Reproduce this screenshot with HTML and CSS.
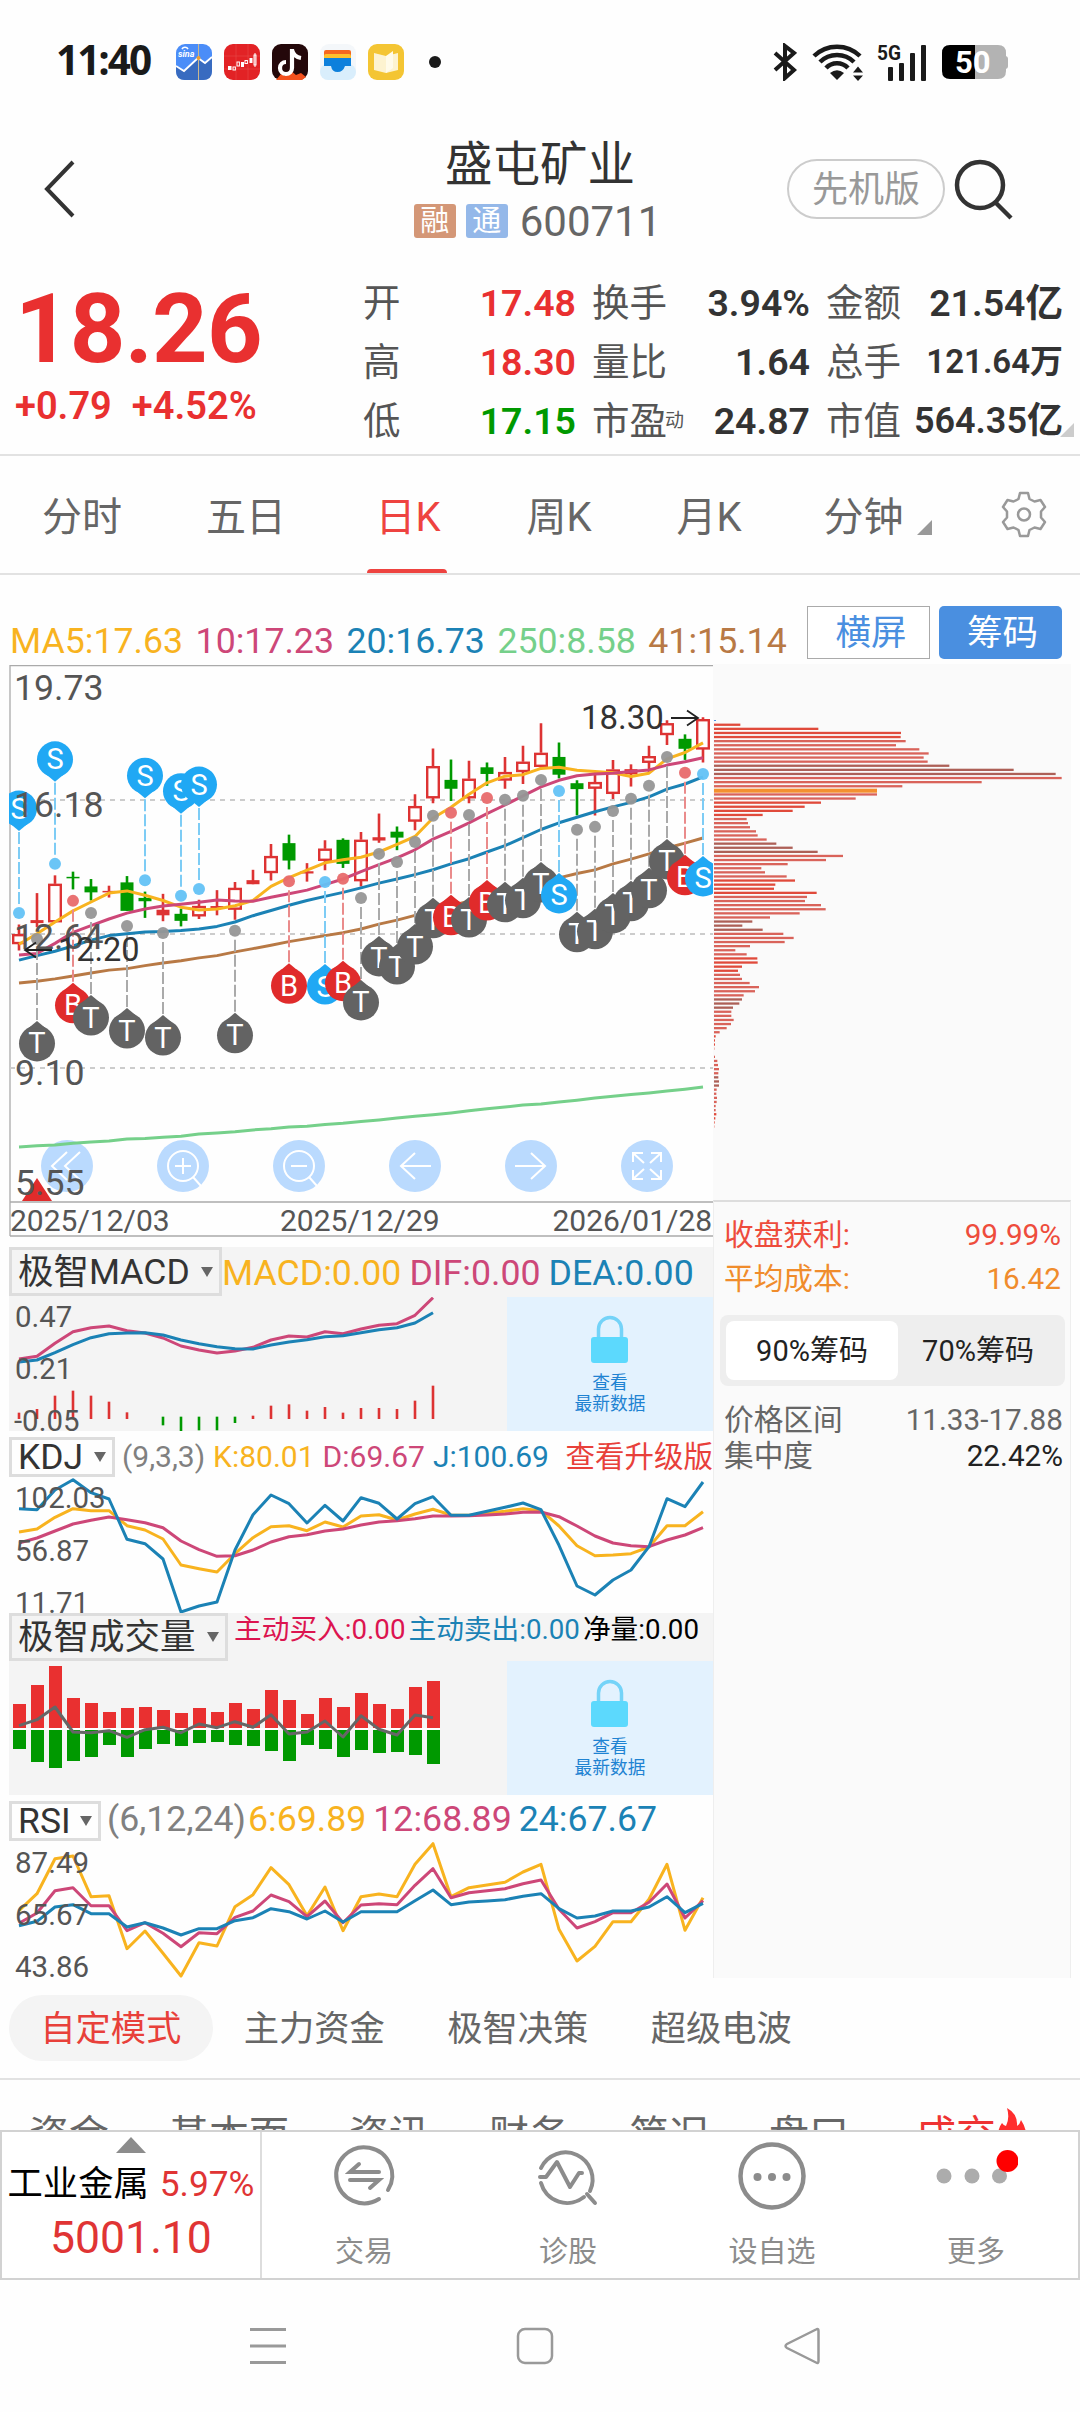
FILE: index.html
```html
<!DOCTYPE html>
<html lang="zh-CN">
<head>
  <meta charset="UTF-8">
  <title>盛屯矿业 600711</title>
  <meta name="viewport" content="width=device-width, initial-scale=1.0">
  <link rel="stylesheet" href="styles.css">
</head>
<body>
  <div class="status-bar">
    <span class="clock">11:40</span>
    <div class="notif-icons">
      <svg width="36" height="36" viewBox="0 0 36 36">
        <rect width="36" height="36" rx="9" fill="#4b8df8"/>
        <path d="M0 22L8 27 22 14 29 19 36 13V27Q36 36 27 36H9Q0 36 0 27Z" fill="#386bc0"/>
        <path d="M0 22L8 27 22 14 29 19 36 13" fill="none" stroke="#fff" stroke-width="1.8"/>
        <path d="M22.5 0V36" stroke="#c9b78f" stroke-width="1"/>
        <circle cx="22.5" cy="14" r="2" fill="#f0a030"/>
        <text x="2" y="13" font-size="9" font-weight="700" font-style="italic" fill="#fff">sina</text>
        <path d="M6 5a3.5 3.5 0 0 1 6 0" fill="none" stroke="#fff" stroke-width="1.6"/>
      </svg>
      <svg width="36" height="36" viewBox="0 0 36 36">
        <rect width="36" height="36" rx="9" fill="#e22225"/>
        <path d="M12 0V36M24 0V36M0 12H36M0 25H36" stroke="#ea4a48" stroke-width=".6"/>
        <g fill="none" stroke="#fff" stroke-width="1">
          <rect x="9" y="23" width="2.4" height="3"/><rect x="13" y="18" width="2.4" height="4"/>
          <rect x="21" y="16.500" width="2.4" height="3"/><rect x="30" y="11" width="2" height="10"/>
          <path d="M31 9V23"/>
        </g>
        <path d="M4 22h3.5v4H4zM17 18h3v5h-3zM25.500 14h3v5h-3z" fill="#fff"/>
      </svg>
      <svg width="36" height="36" viewBox="0 0 36 36">
        <rect width="36" height="36" rx="9" fill="#24080a"/>
        <path d="M4 36L9 30 13 32 18 26 24 31 29 29 34 33 30 36Z" fill="#f4511e"/>
        <path d="M20 5V24a6 6 0 1 1-6-6M20 6q2 7 9 8" fill="none" stroke="#fff" stroke-width="4.200"/>
      </svg>
      <svg width="36" height="36" viewBox="0 0 36 36">
        <rect width="36" height="36" rx="9" fill="#f4f7fa"/>
        <rect y="20" width="36" height="16" rx="8" fill="#d9eefc"/>
        <rect x="4" y="6" width="27" height="8" rx="2" fill="#f4671f"/>
        <rect x="4" y="10" width="27" height="8" rx="2" fill="#fcc02e"/>
        <path d="M4 14H31V22H25Q23 28 17.500 28T11 22H4Z" fill="#0d80dc"/>
      </svg>
      <svg width="36" height="36" viewBox="0 0 36 36">
        <rect width="36" height="36" rx="9" fill="#f4c533"/>
        <path d="M6 9L18 12 30 9V26L18 29 6 26Z" fill="#fdf3d0"/>
        <path d="M18 12L25 7V24L18 29Z" fill="#fffbea"/>
      </svg>
    </div>
    <span class="notif-dot"></span>
    <div class="sys-icons">
      <svg width="24" height="38" viewBox="0 0 24 38">
        <path d="M2 10L21 27 12 35V3L21 10 2 27" fill="none" stroke="#1a1a1a" stroke-width="4"/>
      </svg>
      <svg width="52" height="38" viewBox="0 0 52 38">
        <g fill="none" stroke="#1a1a1a" stroke-width="4.500">
          <path d="M2 13a33 33 0 0 1 46 0M8 19a24 24 0 0 1 34 0M14 25a15 15 0 0 1 22 0"/>
        </g>
        <path d="M18 30q7-5.500 14 0L25 37Z" fill="#1a1a1a"/>
        <path d="M41 29.500L46 23.500 51 29.500ZM41 32.500H51L46 38Z" fill="#1a1a1a"/>
      </svg>
      <svg width="50" height="38" viewBox="0 0 50 38">
        <text x="0" y="16.500" font-size="20" font-weight="700" textLength="24" lengthAdjust="spacingAndGlyphs" fill="#1a1a1a">5G</text>
        <g fill="#1a1a1a">
          <rect x="11" y="24" width="5" height="14" rx="1"/><rect x="22" y="20" width="5" height="18" rx="1"/>
          <rect x="33" y="10" width="5" height="28" rx="1"/><rect x="44" y="2" width="5" height="36" rx="1"/>
        </g>
      </svg>
      <svg width="67" height="34" viewBox="0 0 67 34">
        <rect x="50" y="11" width="16" height="13" rx="3" fill="#b3b3b3"/>
        <path d="M33 0H56Q64 0 64 8V26Q64 34 56 34H33Z" fill="#b3b3b3"/>
        <path d="M8 0H33V34H8Q0 34 0 26V8Q0 0 8 0Z" fill="#000"/>
        <text x="13" y="28" font-size="31" font-weight="700" fill="#fff">50</text>
      </svg>
    </div>
  </div>

  <header class="title-bar">
    <svg class="back" width="32" height="58" viewBox="0 0 32 58">
      <path d="M29 2L3 29 29 56" fill="none" stroke="#333" stroke-width="4"/>
    </svg>
    <div class="stock-name">
      <h1>盛屯矿业</h1>
      <div class="code-row">
        <span class="tag tag-rong">融</span>
        <span class="tag tag-tong">通</span>
        <span class="code">600711</span>
      </div>
    </div>
    <div class="title-actions">
      <span class="pioneer">先机版</span>
      <svg width="60" height="62" viewBox="0 0 60 62">
        <circle cx="26" cy="26" r="23" fill="none" stroke="#333" stroke-width="4.500"/>
        <path d="M41 43L57 59" stroke="#333" stroke-width="4.500"/>
      </svg>
    </div>
  </header>

  <section class="quote">
    <div class="price-col">
      <div class="price">18.26</div>
      <div class="change"><span>+0.79</span><span>+4.52%</span></div>
    </div>
    <div class="stats">
      <span class="lbl">开</span><b class="up">17.48</b><span class="lbl">换手</span><b>3.94%</b><span class="lbl">金额</span><b>21.54亿</b>
      <span class="lbl">高</span><b class="up">18.30</b><span class="lbl">量比</span><b>1.64</b><span class="lbl">总手</span><b class="fit-s">121.64万</b>
      <span class="lbl">低</span><b class="down">17.15</b><span class="lbl">市盈<small>动</small></span><b>24.87</b><span class="lbl">市值</span><b class="fit-m">564.35亿</b>
    </div>
    <i class="corner"></i>
  </section>

  <nav class="period-tabs">
    <span class="w1">分时</span>
    <span class="w1">五日</span>
    <span class="w2 active">日K</span>
    <span class="w3">周K</span>
    <span class="w3">月K</span>
    <span class="w4">分钟<i class="corner-tri"></i></span>
    <svg width="48" height="48" viewBox="0 0 48 48">
      <g fill="none" stroke="#999" stroke-width="2.500" stroke-linejoin="round">
        <path d="M20 2h8l1.500 6 5 2.500 6-1.500 4.500 7-4 4.500v6l4 4.500-4.500 7-6-1.500-5 2.500L28 45h-8l-1.500-6-5-2.500-6 1.500L3 31l4-4.500v-6L3 16l4.500-7 6 1.500 5-2.500Z"/>
        <circle cx="24" cy="23.500" r="6"/>
      </g>
    </svg>
  </nav>

  <div class="ma-row">
    <div class="ma-values">
      <span class="c-yellow">MA5:17.63</span>
      <span class="c-pink">10:17.23</span>
      <span class="c-blue">20:16.73</span>
      <span class="c-green">250:8.58</span>
      <span class="c-brown">41:15.14</span>
    </div>
    <div class="ma-buttons">
      <button class="btn-line">横屏</button>
      <button class="btn-fill">筹码</button>
    </div>
  </div>

  <main class="board">
    <div class="charts">
      <svg id="kline" width="704" height="572"></svg>

      <div class="ind-head grey head-macd">
        <span class="picker">极智MACD<i></i></span>
        <div class="vals big"><span class="c-yellow">MACD:0.00</span><span class="c-pink">DIF:0.00</span><span class="c-blue">DEA:0.00</span></div>
      </div>
      <div class="ind-body grey">
        <svg id="macd" width="498" height="134"></svg>
        <div class="lock-pane">
          <svg width="38" height="48" viewBox="0 0 38 48">
            <path d="M7.500 24V14a11.500 11.500 0 0 1 23 0V24" fill="none" stroke="#74d3f8" stroke-width="3.500"/>
            <rect x="0" y="22" width="37" height="26" rx="3" fill="#5cd9fd"/>
          </svg>
          <p>查看<br>最新数据</p>
        </div>
      </div>

      <div class="ind-head head-kdj">
        <span class="picker">KDJ<i></i></span>
        <div class="vals mid"><span class="c-grey">(9,3,3)</span><span class="c-yellow">K:80.01</span><span class="c-pink">D:69.67</span><span class="c-blue">J:100.69</span></div>
        <span class="upgrade">查看升级版</span>
      </div>
      <svg id="kdj" width="704" height="135"></svg>

      <div class="ind-head grey head-vol">
        <span class="picker">极智成交量<i></i></span>
        <div class="vals small"><span class="c-red">主动买入:0.00</span><span class="c-blue">主动卖出:0.00</span><span class="c-black">净量:0.00</span></div>
      </div>
      <div class="ind-body grey">
        <svg id="vol" width="498" height="134"></svg>
        <div class="lock-pane">
          <svg width="38" height="48" viewBox="0 0 38 48">
            <path d="M7.500 24V14a11.500 11.500 0 0 1 23 0V24" fill="none" stroke="#74d3f8" stroke-width="3.500"/>
            <rect x="0" y="22" width="37" height="26" rx="3" fill="#5cd9fd"/>
          </svg>
          <p>查看<br>最新数据</p>
        </div>
      </div>

      <div class="ind-head head-rsi">
        <span class="picker">RSI<i></i></span>
        <div class="vals big"><span class="c-grey">(6,12,24)</span><span class="c-yellow">6:69.89</span><span class="c-pink">12:68.89</span><span class="c-blue">24:67.67</span></div>
      </div>
      <svg id="rsi" width="704" height="137"></svg>
    </div>

    <aside class="chips">
      <svg id="chips" width="358" height="536"></svg>
      <div class="chip-info">
        <div class="chip-row c-profit"><span>收盘获利:</span><span>99.99%</span></div>
        <div class="chip-row c-cost"><span>平均成本:</span><span>16.42</span></div>
        <div class="switch"><span class="on">90%筹码</span><span>70%筹码</span></div>
        <div class="chip-row range"><span>价格区间</span><span>11.33-17.88</span></div>
        <div class="chip-row range"><span>集中度</span><span class="dark">22.42%</span></div>
      </div>
    </aside>
  </main>

  <nav class="mode-tabs">
    <span class="active">自定模式</span><span>主力资金</span><span>极智决策</span><span>超级电波</span>
  </nav>

  <nav class="detail-tabs">
    <span>资金</span><span>基本面</span><span>资讯</span><span>财务</span><span>简况</span><span>盘口</span>
    <span class="hot">成交<svg width="32" height="38" viewBox="0 0 32 38"><path d="M11 0Q22 6 21 18 24 16 25 12 31 21 30 30 24 38 14 38 4 38 2 28 2 20 6 15 8 18 10 18 14 10 11 0Z" fill="#ff2d2d"/></svg></span>
  </nav>

  <footer class="toolbar">
    <div class="sector">
      <i class="up-tri"></i>
      <div class="sector-line"><span>工业金属</span><span class="rise">5.97%</span></div>
      <div class="sector-val">5001.10</div>
    </div>
    <div class="tool">
      <svg width="72" height="72" viewBox="0 0 72 72" fill="none" stroke="#8c8c8c" stroke-width="4" stroke-linecap="round">
        <path d="M51 59A28 28 0 1 1 60 50"/>
        <path d="M51 32H22L31 24M22 40H51L42 48"/>
      </svg>
      <span>交易</span>
    </div>
    <div class="tool">
      <svg width="72" height="72" viewBox="0 0 72 72" fill="none" stroke="#8c8c8c" stroke-width="4" stroke-linecap="round">
        <path d="M9 28A27 27 0 1 1 58 51M9 43A27 27 0 0 0 52 57"/>
        <path d="M8 37H14L25 22 38 47 47 33H50M55 54L63 63" stroke-linejoin="round"/>
      </svg>
      <span>诊股</span>
    </div>
    <div class="tool">
      <svg width="72" height="72" viewBox="0 0 72 72">
        <circle cx="36" cy="36" r="31.500" fill="none" stroke="#8c8c8c" stroke-width="4.500"/>
        <g fill="#8c8c8c"><circle cx="21.500" cy="37" r="4"/><circle cx="36" cy="37" r="4"/><circle cx="50.500" cy="37" r="4"/></g>
      </svg>
      <span>设自选</span>
    </div>
    <div class="tool">
      <svg width="84" height="72" viewBox="0 0 84 72">
        <g fill="#acacac"><circle cx="10" cy="36" r="7.500"/><circle cx="38" cy="36" r="7.500"/><circle cx="65.500" cy="36" r="7.500"/></g>
        <circle cx="73.500" cy="21" r="11" fill="#f00"/>
      </svg>
      <span>更多</span>
    </div>
  </footer>

  <div class="sys-nav">
    <svg width="40" height="40" viewBox="0 0 40 40"><path d="M2 3.500H38M2 20H38M2 36.500H38" stroke="#999" stroke-width="3"/></svg>
    <svg width="40" height="40" viewBox="0 0 40 40"><rect x="3" y="3" width="34" height="34" rx="7" fill="none" stroke="#999" stroke-width="2.500"/></svg>
    <svg width="40" height="40" viewBox="0 0 40 40"><path d="M34 3.500Q36.500 2 36.500 5V35Q36.500 38 34 36.500L5 22Q2 20 5 18Z" fill="none" stroke="#999" stroke-width="2.500"/></svg>
  </div>

  <script src="charts.js"></script>
</body>
</html>
```

FILE: styles.css
```css
* {
  box-sizing: border-box;
}
html, body {
  margin: 0;
  padding: 0;
}
body {
  width: 1080px;
  height: 2412px;
  overflow: hidden;
  background: #fefefe;
  color: #333;
  font-family: Roboto, "Noto Sans CJK SC", sans-serif;
}
svg {
  display: block;
  flex: none;
}
svg text {
  font-family: Roboto, "Noto Sans CJK SC", sans-serif;
}
span, b {
  white-space: nowrap;
}

/* status bar */
.status-bar {
  height: 124px;
  display: flex;
  align-items: center;
  padding-left: 56px;
}
.clock {
  width: 120px;
  font-family: "Open Sans", sans-serif;
  font-size: 40.5px;
  font-weight: 700;
  letter-spacing: -2px;
  line-height: 50px;
  margin-top: -4px;
  color: #1a1a1a;
}
.notif-icons {
  display: flex;
  gap: 12px;
}
.notif-dot {
  width: 12px;
  height: 12px;
  margin-left: 25px;
  border-radius: 50%;
  background: #1a1a1a;
}
.sys-icons {
  display: flex;
  align-items: center;
  margin-left: 332px;
}
.sys-icons svg:nth-child(2) {
  margin-left: 15px;
}
.sys-icons svg:nth-child(3) {
  margin-left: 13px;
}
.sys-icons svg:nth-child(4) {
  margin-left: 15px;
}

/* title */
.title-bar {
  height: 131px;
  display: flex;
  position: relative;
  justify-content: center;
}
.back {
  position: absolute;
  left: 44px;
  top: 36px;
}
.stock-name {
  display: flex;
  flex-direction: column;
  align-items: center;
  padding-top: 12px;
}
.stock-name h1 {
  margin: 0;
  font-size: 47.5px;
  font-weight: 400;
  line-height: 58px;
}
.code-row {
  display: flex;
  align-items: center;
  height: 54px;
  margin-right: 5px;
}
.tag {
  width: 42px;
  height: 34px;
  margin-right: 10px;
  border-radius: 3px;
  color: #fff;
  font-size: 29px;
  line-height: 34px;
  text-align: center;
}
.tag-rong {
  background: #d49777;
}
.tag-tong {
  background: #94b8e9;
}
.code {
  margin-left: 2px;
  font-size: 42px;
  color: #666;
}
.title-actions {
  position: absolute;
  right: 66px;
  top: 35px;
  display: flex;
  gap: 9px;
}
.pioneer {
  width: 158px;
  height: 60px;
  border: 2px solid #ccc;
  border-radius: 30px;
  color: #999;
  font-size: 36px;
  line-height: 58px;
  text-align: center;
}

/* quote */
.quote {
  position: relative;
  display: flex;
  height: 201px;
  padding-top: 18px;
  border-bottom: 2px solid #e2e2e2;
}
.price-col {
  width: 363px;
  padding-left: 15px;
  color: #e93030;
  font-weight: 500;
}
.price {
  height: 112px;
  line-height: 112px;
  font-size: 97px;
  font-weight: 700;
  letter-spacing: -0.8px;
}
.change {
  display: flex;
  gap: 20px;
  font-size: 38px;
  line-height: 42px;
  font-weight: 600;
}
.stats {
  display: grid;
  grid-template-columns: 78px 135px 93px 141px 94px 159px;
  grid-template-rows: repeat(3, 59px);
  justify-content: start;
  align-items: center;
  font-size: 37.5px;
  line-height: 44px;
}
.stats b {
  font-weight: 600;
  text-align: right;
}
.stats .lbl {
  color: #555;
  font-size: 37.5px;
}
.stats .lbl:nth-child(6n+3), .stats .lbl:nth-child(6n+5) {
  padding-left: 16px;
}
.stats small {
  display: inline-block;
  margin-left: -2px;
  font-size: 19px;
  vertical-align: 7px;
  line-height: 1;
}
.stats .up {
  color: #e93030;
}
.stats .down {
  color: #009900;
}
.stats .fit-s {
  font-size: 33px;
}
.stats .fit-m {
  font-size: 36px;
}
.corner {
  position: absolute;
  right: 6px;
  bottom: 17px;
  border-left: 14px solid transparent;
  border-bottom: 14px solid #ccc;
}

/* period tabs */
.period-tabs {
  display: flex;
  align-items: center;
  height: 119px;
  border-bottom: 2px solid #e2e2e2;
  color: #666;
  font-size: 40px;
  text-align: center;
}
.period-tabs span {
  position: relative;
  height: 117px;
  line-height: 123px;
}
.period-tabs .w1 { width: 164px; }
.period-tabs .w2 { width: 154px; padding-right: -4px; }
.period-tabs .w3 { width: 150px; }
.period-tabs .w4 {
  width: 159px;
  margin-right: 57px;
}
.period-tabs .active {
  color: #ee4340;
  width: 156px;
  padding-left: 4px;
}
.period-tabs .active::after {
  content: "";
  position: absolute;
  left: 39px;
  bottom: 0;
  width: 80px;
  height: 4px;
  border-radius: 4px 4px 0 0;
  background: #ee4340;
}
.corner-tri {
  position: absolute;
  right: 11px;
  top: 64px;
  border-left: 15px solid transparent;
  border-bottom: 15px solid #999;
}

/* MA values */
.ma-row {
  display: flex;
  height: 89px;
  padding: 31px 18px 0 10px;
  justify-content: space-between;
}
.ma-values {
  display: flex;
  gap: 12.5px;
  padding-top: 15px;
  font-size: 35.7px;
  line-height: 40px;
}
.ma-buttons {
  display: flex;
  gap: 9px;
}
.ma-buttons button {
  width: 123px;
  height: 53px;
  padding: 0;
  font: inherit;
  font-size: 35.5px;
  line-height: 50px;
}
.ma-buttons .btn-line {
  padding-left: 5px;
  border: 1px solid #aaa;
  background: #fff;
  color: #4a8fe0;
}
.ma-buttons .btn-fill {
  padding-left: 4px;
  border: 0;
  border-radius: 5px;
  background: #4a8fe0;
  color: #fff;
}
.c-yellow { color: #f8b31f; }
.c-pink { color: #cd4778; }
.c-blue { color: #1b82b5; }
.c-green { color: #75d08a; }
.c-brown { color: #b87945; }
.c-grey { color: #808080; }
.c-red { color: #dc1450; }
.c-black { color: #000; }

/* charts */
.board {
  display: flex;
  height: 1314px;
  padding-left: 9px;
}
.charts {
  width: 704px;
  padding-top: 1px;
}
.grey {
  background: #f4f4f4;
}
.ind-head {
  display: flex;
  align-items: flex-start;
}
.picker {
  display: flex;
  align-items: center;
  height: 49px;
  padding: 0 6px;
  border: 3px solid #ddd;
  color: #333;
  font-size: 35.5px;
  line-height: 40px;
}
.picker i {
  margin-left: auto;
  border: 6px solid transparent;
  border-top: 10px solid #666;
  border-bottom: 0;
}
.vals {
  display: flex;
}
.vals.big {
  font-size: 35.7px;
  gap: 8px;
}
.vals.mid {
  font-size: 30px;
}
.vals.small {
  font-size: 27.7px;
  gap: 3px;
}
.head-macd {
  height: 50px;
  margin-top: 10px;
}
.head-macd .picker { width: 213px; }
.head-macd .vals {
  line-height: 52px;
}
.head-kdj {
  height: 47px;
  padding-top: 6px;
}
.head-kdj .picker {
  width: 106px;
  height: 40px;
}
.head-kdj .vals {
  padding-left: 7px;
  gap: 8px;
  line-height: 40px;
}
.upgrade {
  margin-left: auto;
  color: #e8403a;
  font-size: 29.5px;
  line-height: 40px;
}
.head-vol {
  height: 48px;
}
.head-vol .picker {
  width: 219px;
  height: 48px;
}
.head-vol .vals {
  padding-left: 6px;
  line-height: 34px;
}
.head-rsi {
  height: 46px;
  padding-top: 6px;
}
.head-rsi .picker {
  width: 92px;
  height: 40px;
}
.head-rsi .vals {
  padding-left: 6px;
  line-height: 37px;
}
.head-rsi .c-grey {
  margin-right: -6px;
}
.head-rsi .vals span + span + span {
  margin-left: -1px;
}
.ind-body {
  display: flex;
  height: 134px;
}
.lock-pane {
  width: 206px;
  padding-top: 18px;
  background: #e3f2fe;
  display: flex;
  flex-direction: column;
  align-items: center;
}
.lock-pane p {
  margin: 10px 0 0;
  color: #1f83d2;
  font-size: 17.7px;
  line-height: 21px;
  text-align: center;
}

/* chip distribution */
.chips {
  width: 358px;
  background: #fafafa;
}
.chip-info {
  height: 778px;
  padding: 15px 7px 0;
  border-top: 2px solid #ddd;
  border-left: 1px solid #eee;
  border-right: 1px solid #eee;
}
.chip-row {
  display: flex;
  justify-content: space-between;
  padding: 0 2px 0 3px;
  font-size: 29.7px;
  line-height: 36px;
}
.c-profit {
  color: #ee4c3c;
  margin-bottom: 8px;
}
.c-cost {
  color: #f08c2c;
}
.switch {
  display: flex;
  width: 345px;
  height: 71px;
  margin: 18px 0 16px;
  margin-left: -1px;
  padding: 6px;
  border-radius: 8px;
  background: #eee;
  font-size: 29px;
  line-height: 61px;
  text-align: center;
}
.switch span {
  width: 172px;
  height: 59px;
  border-radius: 8px;
  color: #222;
}
.switch span + span {
  width: 160px;
}
.switch .on {
  background: #fff;
}
.chip-row.range {
  padding-right: 0;
  color: #666;
}
.chip-row .dark {
  color: #222;
}

/* mode tabs */
.mode-tabs {
  display: flex;
  height: 102px;
  padding: 17px 9px 0;
  border-bottom: 2px solid #e2e2e2;
  color: #666;
  font-size: 35.3px;
  line-height: 69px;
  text-align: center;
}
.mode-tabs span {
  width: 203.500px;
  height: 66px;
}
.mode-tabs .active {
  border-radius: 33px;
  background: #f4f4f4;
  color: #e8403a;
}

/* second row of tabs runs under the toolbar */
.detail-tabs {
  display: flex;
  height: 50px;
  overflow: hidden;
  padding: 25px 0 0 29px;
  gap: 60px;
  color: #666;
  font-size: 40px;
  line-height: 62px;
}
.detail-tabs .hot {
  display: flex;
  margin-left: 7px;
  color: #ee3333;
}
.detail-tabs .hot svg {
  margin-top: 3px;
}

/* toolbar */
.toolbar {
  display: flex;
  height: 150px;
  border: 2px solid #d2d2d2;
  background: #fff;
}
.sector {
  width: 260px;
  border-right: 2px solid #ddd;
  display: flex;
  flex-direction: column;
  align-items: center;
  padding-top: 5px;
}
.up-tri {
  border: 15px solid transparent;
  border-top: 0;
  border-bottom: 16px solid #8c8c8c;
}
.sector-line {
  display: flex;
  gap: 11px;
  margin-top: 11px;
  font-size: 35.3px;
  line-height: 40px;
  color: #000;
}
.sector .rise, .sector-val {
  color: #e03434;
}
.sector-val {
  margin-top: 4px;
  font-size: 44.5px;
  line-height: 60px;
}
.tool {
  flex: 1;
  display: flex;
  flex-direction: column;
  align-items: center;
  padding-top: 8px;
  color: #8c8c8c;
  font-size: 29px;
}
.tool span {
  margin-top: 20px;
  line-height: 40px;
}

.sys-nav {
  display: flex;
  gap: 227px;
  padding: 46px 0 0 248px;
}
```

FILE: charts.js
```js
const RED = '#dd3333', GREEN = '#009900';
const YELLOW = '#f8b31f', PINK = '#cd4778', BLUE = '#1b82b5', BROWN = '#b87945', LIME = '#75d08a';
const barX = i => 10 + 18 * i;

function line(data, y, color, w = 3) {
  const pts = data.map((v, i) => `${barX(i)},${y(v).toFixed(1)}`).join(' ');
  return `<polyline points="${pts}" fill="none" stroke="${color}" stroke-width="${w}" stroke-linejoin="round"/>`;
}

function label(text, x, y, size, color = '#555') {
  return `<text x="${x}" y="${y}" font-size="${size}" fill="${color}">${text}</text>`;
}

function drawKline() {
  const y = v => v * 0.37 - 5;
  // type: h = hollow up, f = filled up, g = down; then high, body top, body bottom, low
  const candles = [
    ['h',715,741,765,785],['f',630,703,711,722],['h',582,605,706,706],['g',572,586,590,620],['g',592,612,628,650],
    ['f',610,624,628,642],['g',584,601,678,678],['g',626,643,652,697],['f',632,675,690,706],['g',672,686,705,720],
    ['h',648,665,690,700],['f',622,665,673,690],['h',600,616,672,702],['f',567,595,606,606],['h',497,530,573,596],
    ['g',472,495,542,566],['f',549,571,577,599],['h',487,510,540,568],['g',482,486,551,562],['h',465,486,595,612],
    ['f',415,479,488,494],['g',450,464,480,514],['h',363,395,434,460],['h',239,287,371,387],['g',269,324,348,381],
    ['h',272,321,371,387],['g',277,290,308,340],['h',262,303,323,348],['h',232,275,300,335],['h',171,251,286,292],
    ['g',223,262,310,320],['g',325,333,349,420],['h',310,330,345,420],['h',270,296,359,376],['f',282,295,309,342],
    ['h',232,260,275,305],['h',163,171,200,230],['g',201,213,240,270],['h',155,160,239,277]
  ];
  const signals = [
    [0,'S',684,-1],[2,'S',551,-1],[7,'S',595,-1],[9,'S',637,-1],[10,'S',619,-1],
    [1,'T',754],[3,'B',651],[4,'T',684],[6,'T',719],[8,'T',738],[12,'T',732],[15,'B',598],[17,'S',600],[18,'B',591],
    [19,'T',643],[20,'T',524],[21,'T',546],[22,'T',492],[23,'T',421],[24,'B',413],[25,'T',419],[26,'B',373],
    [27,'T',378],[28,'T',367],[29,'T',324],[30,'S',354],[31,'T',459],[32,'T',451],[33,'T',408],[34,'T',375],
    [35,'T',340],[36,'T',262],[37,'B',305],[38,'S',308]
  ];
  const fill = { S: '#20a8f4', B: '#e02b2b', T: '#636363' };
  const soft = { S: '#7dccf5', B: '#ea8b8b', T: '#aaa' };
  const dot = { S: '#63c2f6', B: '#e86a6c', T: '#969696' };

  let s = '';
  s += '<path d="M1 .5H704M1 537H704M1 571H704M1 0V571" fill="none" stroke="#aaa" stroke-width="1.300"/>';
  s += '<path d="M1 135H704M1 269H704M1 403H704" stroke="#ccc" stroke-width="1.800" stroke-dasharray="5 5"/>';

  // toolbar circles
  [58, 174, 290, 406, 522, 638].forEach(cx => {
    s += `<circle cx="${cx}" cy="501" r="26" fill="#badafe"/>`;
  });
  s += `<g fill="none" stroke="#fff" stroke-width="2">
    <path d="M58 487L43 501 58 515M71 487L56 501 71 515"/>
    <circle cx="174" cy="501" r="15"/><path d="M184 512L192 521M166 501H182M174 493V509"/>
    <circle cx="290" cy="501" r="15"/><path d="M300 512L308 521M282 501H298"/>
    <path d="M422 501H392M406 488L392 501 406 514"/>
    <path d="M506 501H536M522 488L536 501 522 514"/>
    <path d="M624 497V488H634M624 488L635 498M642 488H652V497M652 488L641 498M624 505V514H634M624 514L635 504M642 514H652V505M652 514L641 504"/>
  </g>`;

  candles.forEach(([t, hi, top, bot, lo], i) => {
    const x = barX(i), c = t === 'g' ? GREEN : RED;
    const thin = bot - top < 5;
    if (t === 'h') {
      s += `<path d="M${x} ${y(hi)}V${y(top)}M${x} ${y(bot)}V${y(lo)}" stroke="${c}" stroke-width="2.600"/>`;
      s += `<rect x="${x - 5.8}" y="${y(top) + 1}" width="11.600" height="${Math.max((bot - top) * 0.37 - 1, 2)}" fill="#fff" stroke="${c}" stroke-width="2.400"/>`;
    } else {
      s += `<path d="M${x} ${y(hi)}V${y(lo)}" stroke="${c}" stroke-width="2.600"/>`;
      s += `<rect x="${x - 6.5}" y="${y(top)}" width="13" height="${thin ? 1.5 : (bot - top) * 0.37}" fill="${c}"/>`;
    }
  });

  s += line([873,868,862,854,846,838,834,826,819,813,805,799,789,780,771,761,753,745,737,727,714,703,690,677,664,652,640,628,615,602,589,577,567,551,538,524,508,495,481], y, BROWN, 2.9);
  s += line([1316,1313,1311,1306,1303,1300,1295,1293,1290,1287,1281,1278,1275,1270,1267,1262,1260,1255,1252,1247,1243,1238,1233,1229,1224,1218,1213,1208,1203,1200,1195,1190,1184,1179,1174,1170,1165,1160,1154], y, LIME, 3);
  s += line([811,799,787,773,757,745,740,735,734,731,727,720,708,691,677,663,650,639,628,616,603,592,580,567,551,537,519,502,480,458,440,425,410,397,385,370,349,335,316], y, BLUE, 3);
  s += line([768,740,708,678,654,630,624,636,650,668,676,673,664,650,612,588,568,548,540,533,519,498,477,427,398,363,332,314,310,293,290,298,301,305,315,306,267,250,224], y, YELLOW, 3);
  s += line([797,793,766,736,718,700,684,673,665,660,655,649,651,652,641,632,622,607,592,572,553,535,513,484,463,440,415,392,367,343,325,313,308,306,301,297,284,275,264], y, PINK, 3);

  signals.forEach(([i, t, d, dir = 1]) => {
    const x = barX(i), dy = y(d);
    s += `<path d="M${x} ${dy + dir * 9}V${dy + dir * 82}" stroke="${soft[t]}" stroke-width="2" stroke-dasharray="12 3"/>`;
    s += `<circle cx="${x}" cy="${dy}" r="6" fill="${dot[t]}" fill-opacity=".95"/>`;
  });
  signals.forEach(([i, t, d, dir = 1]) => {
    const x = barX(i), cy = y(d) + dir * 104.5;
    s += `<circle cx="${x}" cy="${cy}" r="18" fill="${fill[t]}"/>`;
    s += `<path d="M${x - 9} ${cy - dir * 15}L${x} ${cy - dir * 22.5}L${x + 9} ${cy - dir * 15}Z" fill="${fill[t]}"/>`;
    s += `<text x="${x}" y="${cy + 10}" font-size="29" text-anchor="middle" fill="#fff">${t}</text>`;
  });

  s += '<path d="M13 536L28 513 43 536Z" fill="#e02b2b"/>';
  s += label('19.73', 5, 34.5, 35.7) + label('16.18', 5, 151.500, 35.7) + label('12.64', 5, 284, 35.7);
  s += label('9.10', 6, 419.500, 35.7) + label('5.55', 6, 529.500, 35.7);
  s += label('12.20', 49, 295.500, 32.5, '#333') + label('18.30', 572, 64, 33, '#333');
  s += `<path d="M43 285H16M27 277.500L16 285 27 292.500M662 53H689M678 45.500L689 53 678 60.500" fill="none" stroke="#222" stroke-width="1.800"/>`;
  s += label('2025/12/03', 1, 565.500, 30) + label('2025/12/29', 271, 565.500, 30) + label('2026/01/28', 543.500, 565.500, 30);
  document.getElementById('kline').innerHTML = s;
}

function drawMacd() {
  const y = v => v / 3 - 57;
  const bars = [518,507,467,452,467,485,517,0,556,577,571,571,549,527,497,493,512,501,518,504,504,507,482,437];
  let s = '';
  bars.forEach((v, i) => {
    if (!v) return;
    const down = i > 7 && i < 13;
    s += `<path d="M${barX(i)} ${y(down ? 530 : 537)}V${y(v)}" stroke="${down ? GREEN : RED}" stroke-width="2.600"/>`;
  });
  s += line([357,349,310,275,263,258,272,279,294,318,330,339,333,322,300,288,291,275,281,267,256,251,226,173], y, PINK);
  s += line([366,360,338,314,293,281,279,278,285,300,311,320,326,327,315,306,299,290,287,278,269,263,249,218], y, BLUE);
  s += label('0.47', 6, 30, 29.4) + label('0.21', 6, 82, 29.4) + label('-0.05', 5, 133.5, 29.4);
  document.getElementById('macd').innerHTML = s;
}

function drawKdj() {
  const y = v => v / 3 - 238;
  let s = '';
  s += line([876,867,832,806,812,812,857,870,897,975,986,996,941,893,860,857,872,846,861,828,824,840,822,808,825,826,820,814,806,812,858,917,947,945,941,921,857,857,815], y, YELLOW);
  s += line([909,894,873,852,841,831,839,848,863,903,929,949,947,930,906,890,884,873,867,855,846,842,836,828,828,827,825,822,817,816,830,858,888,909,917,920,900,885,863], y, PINK);
  s += line([806,809,750,719,758,777,898,911,957,1116,1098,1086,930,824,765,791,849,796,843,773,790,837,791,770,826,826,814,802,789,809,916,1038,1065,1020,990,920,776,800,726], y, BLUE);
  s += label('102.03', 6, 30, 29.5) + label('56.87', 6, 82.5, 29.5) + label('11.71', 6, 134.5, 29.5);
  document.getElementById('kdj').innerHTML = s;
}

function drawVolume() {
  const y = v => v / 3 - 61;
  const buy = [312,255,198,294,309,336,324,321,330,339,324,336,309,327,270,300,342,294,321,279,312,327,261,243];
  const sell = [447,486,504,483,471,435,471,447,432,438,429,426,435,438,453,483,435,447,471,450,459,456,465,492];
  let s = '';
  buy.forEach((v, i) => {
    s += `<rect x="${barX(i) - 6}" y="${y(v)}" width="13" height="${(384 - v) / 3}" fill="#e93030"/>`;
    s += `<rect x="${barX(i) - 6}" y="${y(390)}" width="13" height="${(sell[i] - 390) / 3}" fill="${GREEN}"/>`;
  });
  s += '<path d="M4 68H431" stroke="#fff" stroke-width="2"/>';
  s += line([377,359,321,396,398,392,412,389,382,398,372,383,365,382,344,402,396,363,411,347,388,405,345,353], y, '#666');
  document.getElementById('vol').innerHTML = s;
}

function drawRsi() {
  const y = v => v / 3 - 241;
  let s = '';
  s += line([932,881,776,768,890,887,1046,993,1060,1128,1028,1038,920,884,803,854,947,861,992,890,882,890,793,731,890,863,855,847,816,793,988,1083,1039,965,965,898,793,991,893], y, YELLOW);
  s += line([970,939,872,863,917,917,992,968,1000,1040,998,1001,952,933,885,905,950,903,968,915,911,914,856,806,893,878,872,866,851,840,928,984,965,938,938,907,852,954,902], y, PINK);
  s += line([977,964,921,914,941,941,981,968,984,1005,986,986,962,953,926,935,957,933,966,935,935,935,902,870,914,906,903,899,889,881,926,954,948,933,933,921,890,938,910], y, BLUE);
  s += label('87.49', 6, 32, 29.5) + label('65.67', 6, 84, 29.5) + label('43.86', 6, 136, 29.5);
  document.getElementById('rsi').innerHTML = s;
}

function drawChips() {
  const rows = [79,313,561,560,575,546,616,644,629,641,706,899,1025,1043,803,565,489,489,425,321,272,236,146,98,102,108,126,131,158,187,
    236,311,387,336,221,142,153,218,243,184,180,308,279,273,321,335,257,168,115,85,146,208,239,212,108,64,98,130,131,84,72,78,84,107,
    135,123,89,84,76,57,52,52,59,51,38,17,5,3,3,1,0,3,10,12,15,13,13,15,15,8,7,9,8,5,5,7,4,2,1];
  let s = '<rect x="1" y="56" width="2" height="1" fill="#4a8fe0"/>';
  rows.forEach((w, n) => {
    const top = 60 + n * 4.1 - 0.4;
    const phase = Math.abs(((n - 11 + 190) % 19 + 9) % 19 - 9);
    const c = phase <= 1 ? '#ad6057' : phase >= 8 ? '#e04a3b' : '#d9635a';
    if (n === 16) {
      s += `<rect x="1" y="${top - 0.5}" width="${w / 3}" height="4" fill="#f4902f"/>`;
      return;
    }
    s += `<rect x="1" y="${top}" width="${w / 3}" height="2.300" fill="${c}"/>`;
  });
  document.getElementById('chips').innerHTML = s;
}

drawKline();
drawMacd();
drawKdj();
drawVolume();
drawRsi();
drawChips();
```
